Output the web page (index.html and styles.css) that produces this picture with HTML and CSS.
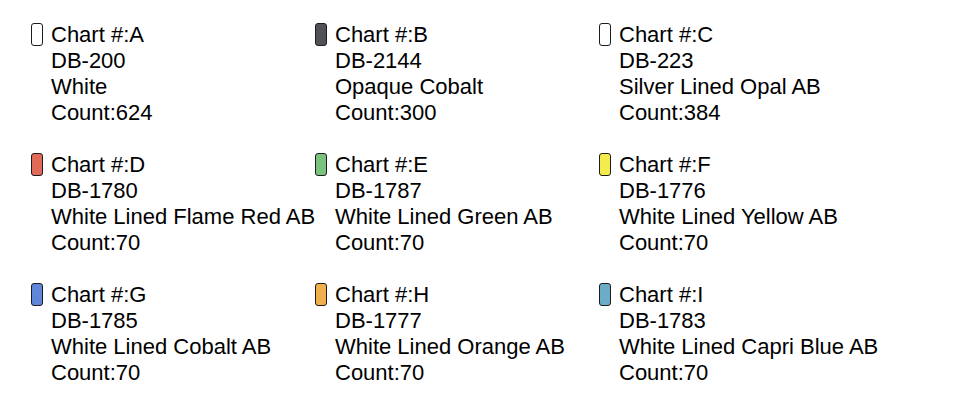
FILE: index.html
```html
<!DOCTYPE html>
<html>
<head>
<meta charset="utf-8">
<link rel="stylesheet" href="styles.css">
</head>
<body>
<div class="legend">
  <div class="item"><span class="swatch c-white"></span><div class="text"><div>Chart #:A</div><div>DB-200</div><div>White</div><div>Count:624</div></div></div>
  <div class="item"><span class="swatch c-cobalt"></span><div class="text"><div>Chart #:B</div><div>DB-2144</div><div>Opaque Cobalt</div><div>Count:300</div></div></div>
  <div class="item"><span class="swatch c-white"></span><div class="text"><div>Chart #:C</div><div>DB-223</div><div>Silver Lined Opal AB</div><div>Count:384</div></div></div>
  <div class="item"><span class="swatch c-red"></span><div class="text"><div>Chart #:D</div><div>DB-1780</div><div>White Lined Flame Red AB</div><div>Count:70</div></div></div>
  <div class="item"><span class="swatch c-green"></span><div class="text"><div>Chart #:E</div><div>DB-1787</div><div>White Lined Green AB</div><div>Count:70</div></div></div>
  <div class="item"><span class="swatch c-yellow"></span><div class="text"><div>Chart #:F</div><div>DB-1776</div><div>White Lined Yellow AB</div><div>Count:70</div></div></div>
  <div class="item"><span class="swatch c-blue"></span><div class="text"><div>Chart #:G</div><div>DB-1785</div><div>White Lined Cobalt AB</div><div>Count:70</div></div></div>
  <div class="item"><span class="swatch c-orange"></span><div class="text"><div>Chart #:H</div><div>DB-1777</div><div>White Lined Orange AB</div><div>Count:70</div></div></div>
  <div class="item"><span class="swatch c-capri"></span><div class="text"><div>Chart #:I</div><div>DB-1783</div><div>White Lined Capri Blue AB</div><div>Count:70</div></div></div>
</div>
</body>
</html>
```
FILE: styles.css
```css
html, body {
  margin: 0;
  padding: 0;
  background: #ffffff;
}
body {
  font-family: "Liberation Sans", Arial, sans-serif;
  font-size: 22px;
  line-height: 26px;
  color: #000;
}
.legend {
  display: grid;
  grid-template-columns: repeat(3, 284px);
  row-gap: 26px;
  padding: 22px 0 0 31px;
}
.item {
  display: flex;
  align-items: flex-start;
  gap: 8px;
}
.swatch {
  flex: none;
  width: 12px;
  height: 23px;
  margin-top: 1px;
  box-sizing: border-box;
  border: 1.5px solid #1c1c1c;
  border-radius: 3px;
}
.text {
  white-space: nowrap;
}
.c-white { background: #ffffff; }
.c-cobalt { background: #505258; }
.c-red { background: #e06a57; }
.c-green { background: #7cc27f; }
.c-yellow { background: #f3ec4c; }
.c-blue { background: #5f86d8; }
.c-orange { background: #efb04f; }
.c-capri { background: #6cacc9; }
```
